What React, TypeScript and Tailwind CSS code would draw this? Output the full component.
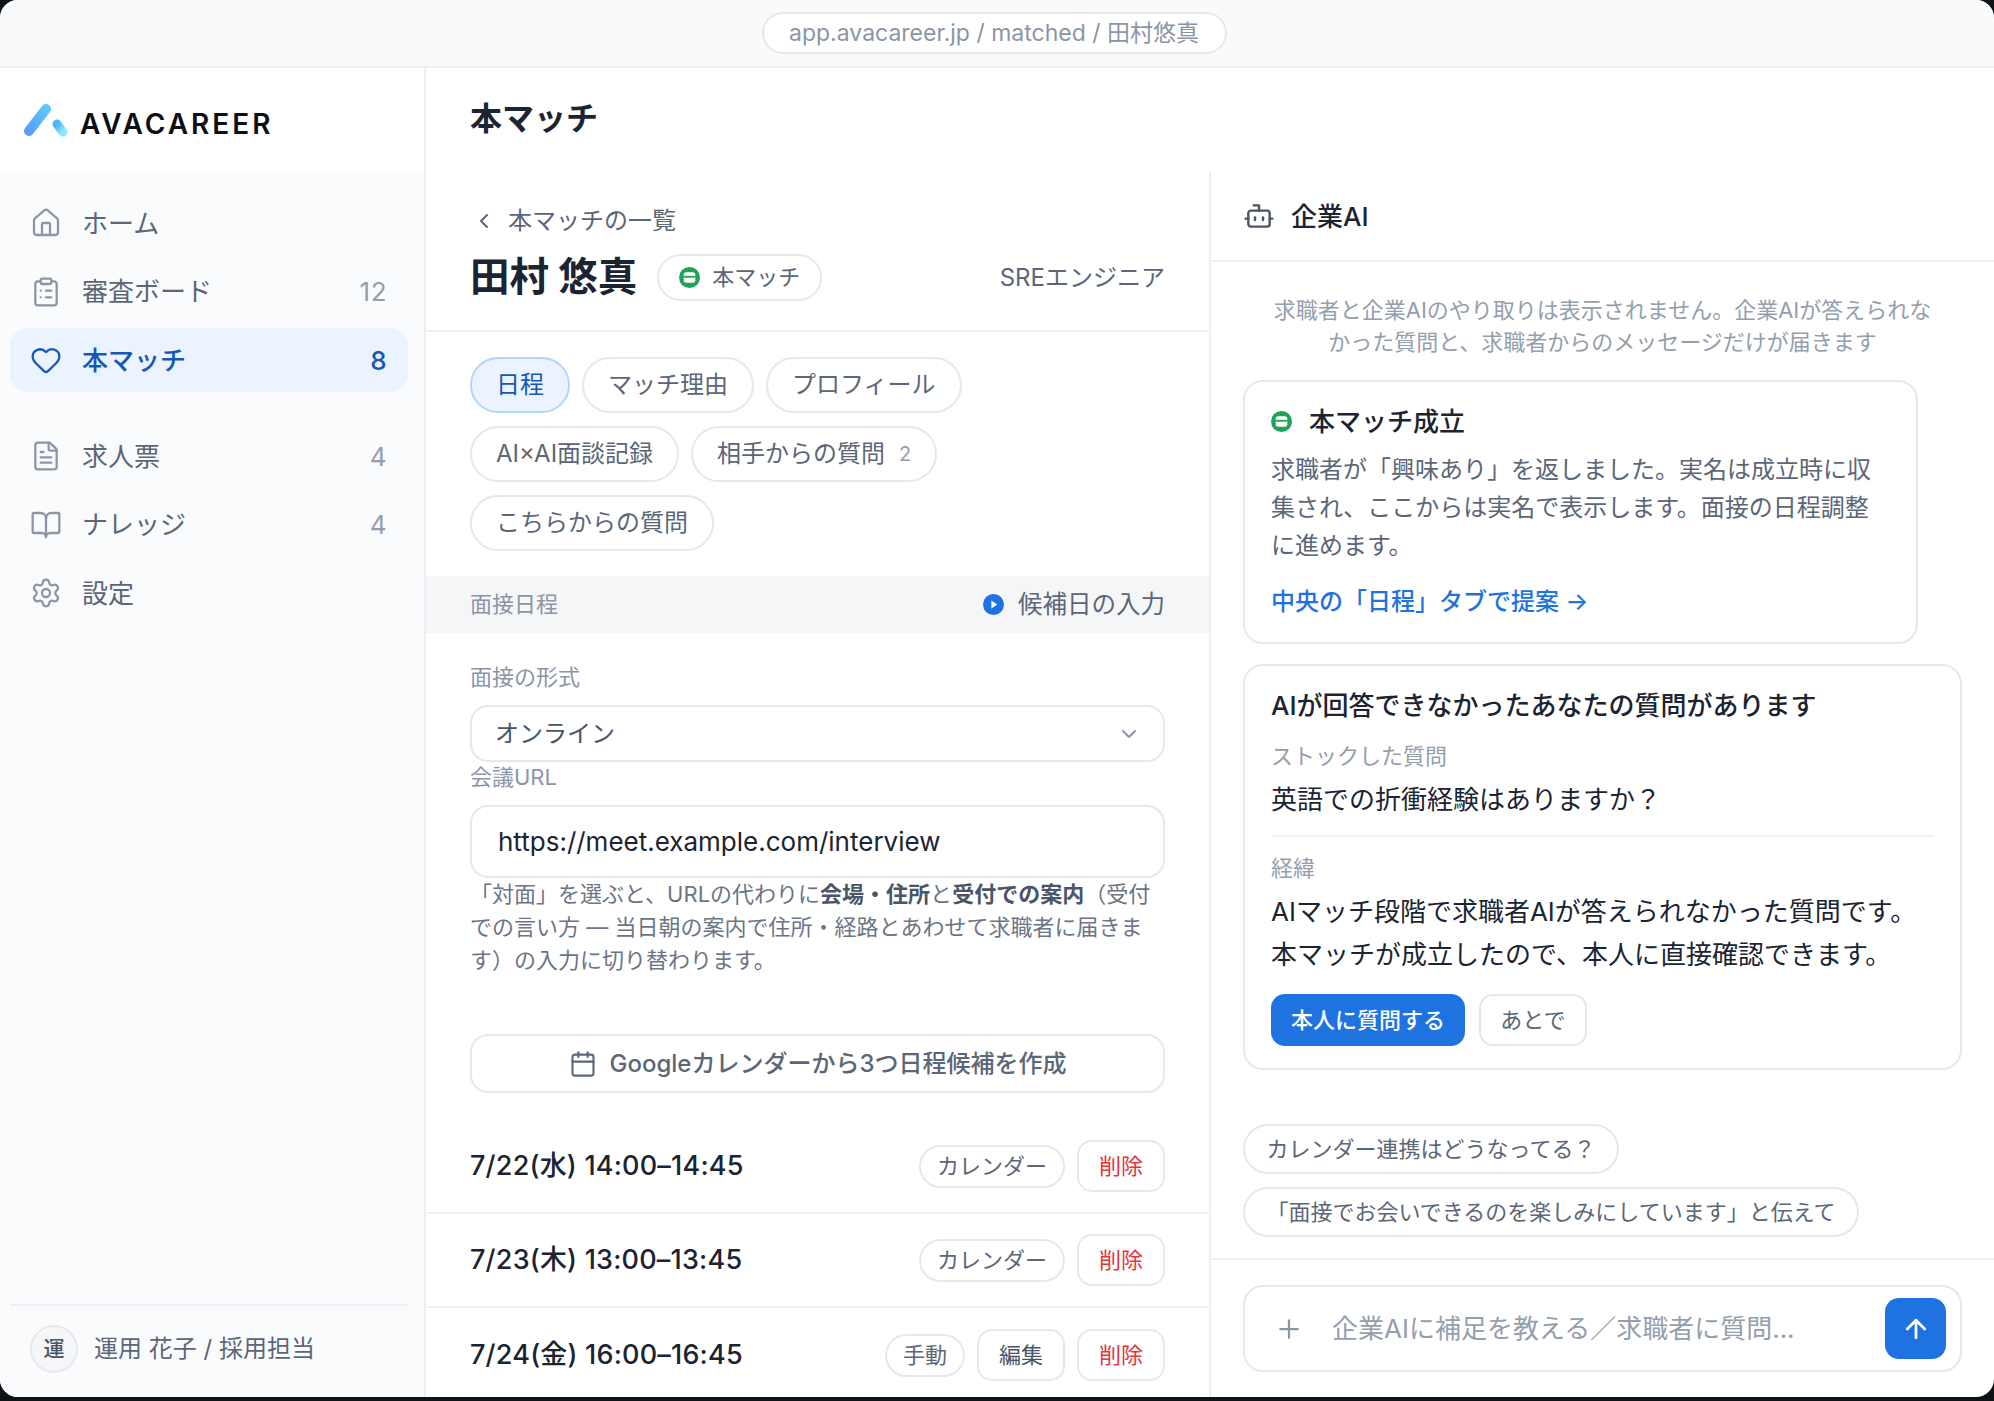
import {
  ArrowUp,
  BookOpen,
  Bot,
  Calendar,
  ChevronDown,
  ChevronLeft,
  ClipboardList,
  FileText,
  Heart,
  House,
  Plus,
  Settings,
} from "lucide-react";

function Logo() {
  return (
    <svg width="46" height="36" viewBox="0 0 46 36" className="shrink-0">
      <defs>
        <linearGradient id="logoA" x1="0" y1="1" x2="1" y2="0">
          <stop offset="0" stopColor="#5b9dfb" />
          <stop offset="1" stopColor="#5cc8fb" />
        </linearGradient>
        <linearGradient id="logoB" x1="0" y1="0" x2="1" y2="1">
          <stop offset="0" stopColor="#4fb4fb" />
          <stop offset="1" stopColor="#8ce8ff" />
        </linearGradient>
      </defs>
      <line x1="7" y1="29" x2="24" y2="7" stroke="url(#logoA)" strokeWidth="10" strokeLinecap="round" />
      <line x1="35" y1="22" x2="41" y2="30" stroke="url(#logoB)" strokeWidth="9" strokeLinecap="round" />
    </svg>
  );
}

function MatchDot({ size = 21 }: { size?: number }) {
  return (
    <svg width={size} height={size} viewBox="0 0 20 20" className="shrink-0">
      <circle cx="10" cy="10" r="10" fill="#1fa35a" />
      <rect x="4.5" y="5" width="11" height="10" rx="2.4" fill="#fff" />
      <rect x="4.5" y="8.4" width="11" height="1.8" fill="#1fa35a" />
    </svg>
  );
}

function PlayDot() {
  return (
    <svg width="21" height="21" viewBox="0 0 20 20" className="shrink-0">
      <circle cx="10" cy="10" r="10" fill="#1f73e0" />
      <path d="M8 6.2 13.5 10 8 13.8Z" fill="#fff" />
    </svg>
  );
}

function NavItem({
  icon: Icon,
  label,
  count,
  active,
}: {
  icon: typeof House;
  label: string;
  count?: number;
  active?: boolean;
}) {
  return (
    <div
      className={`h-[64px] rounded-[18px] pl-[20px] pr-[21px] flex items-center text-[26px] ${
        active ? "bg-[#ebf3fe] text-[#1558b8] font-medium" : "text-[#5b6676]"
      }`}
    >
      <Icon className={`w-[32px] h-[32px] ${active ? "text-[#1558b8]" : "text-[#8b95a5]"}`} strokeWidth={1.7} />
      <span className="ml-[20px] flex-1">{label}</span>
      {count !== undefined && (
        <span className={`tracking-[0.5px] ${active ? "text-[#1558b8]" : "text-[#949eac]"}`}>{count}</span>
      )}
    </div>
  );
}

function Tab({ label, active, count }: { label: string; active?: boolean; count?: number }) {
  return (
    <div
      className={`h-[56px] px-[24px] rounded-full border-2 flex items-center text-[24px] ${
        active ? "bg-[#ebf3fe] border-[#b4d6f9] text-[#1558b8]" : "bg-white border-[#e6e8ec] text-[#5b6676]"
      }`}
    >
      {label}
      {count !== undefined && <span className="ml-[14px] text-[20px] text-[#949eac]">{count}</span>}
    </div>
  );
}

function SlotRow({ date, source, edit }: { date: string; source: string; edit?: boolean }) {
  return (
    <div className="h-[94px] flex items-center justify-between px-[44px] border-b-2 border-[#f1f2f4] last:border-b-0">
      <span className="text-[27px] font-medium tracking-[0.2px] text-[#1b2430]">{date}</span>
      <div className="flex items-center gap-[12px]">
        <span className="h-[43px] px-[16px] rounded-full border-2 border-[#e6e8ec] flex items-center text-[22px] text-[#5b6676]">
          {source}
        </span>
        {edit && (
          <span className="h-[52px] w-[88px] rounded-[15px] border-2 border-[#e6e8ec] flex items-center justify-center text-[22px] text-[#4a5565]">
            編集
          </span>
        )}
        <span className="h-[52px] w-[88px] rounded-[15px] border-2 border-[#e6e8ec] flex items-center justify-center text-[22px] text-[#e5343a]">
          削除
        </span>
      </div>
    </div>
  );
}

export default function App() {
  return (
    <div className="h-[1401px] bg-[#0e1116] font-[Inter,'Noto_Sans_CJK_JP',sans-serif] overflow-hidden">
      <div className="h-[1397px] rounded-[18px] overflow-hidden bg-white flex flex-col">
        <div className="h-[68px] shrink-0 bg-[#f9fafc] border-b-2 border-[#eeeff2] flex items-center justify-center pr-[6px]">
          <div className="h-[42px] w-[465px] rounded-full bg-white border-2 border-[#e6e8ec] flex items-center justify-center text-[23px] text-[#8b95a5]">
            app.avacareer.jp / matched / 田村悠真
          </div>
        </div>

        <div className="flex-1 flex min-h-0">
          <aside className="w-[426px] shrink-0 border-r-2 border-[#eeeff2] flex flex-col bg-[#fafbfd]">
            <div className="h-[104px] shrink-0 bg-white flex items-center pl-[22px]">
              <Logo />
              <span className="ml-[12px] text-[28px] font-semibold tracking-[3px] text-[#0c1014] translate-y-[4px]">
                AVACAREER
              </span>
            </div>
            <nav className="pl-[10px] pr-[16px] pt-[19px] flex flex-col gap-[4.5px]">
              <NavItem icon={House} label="ホーム" />
              <NavItem icon={ClipboardList} label="審査ボード" count={12} />
              <NavItem icon={Heart} label="本マッチ" count={8} active />
              <div className="h-[23px]" />
              <NavItem icon={FileText} label="求人票" count={4} />
              <NavItem icon={BookOpen} label="ナレッジ" count={4} />
              <NavItem icon={Settings} label="設定" />
            </nav>
            <div className="mt-auto ml-[10px] mr-[16px] h-[93px] border-t-2 border-[#eeeff2] flex items-center pl-[20px] pb-[5px]">
              <div className="w-[48px] h-[48px] rounded-full bg-[#f5f6f8] border-2 border-[#e6e8ec] flex items-center justify-center text-[21px] font-medium text-[#4a5565]">
                運
              </div>
              <span className="ml-[16px] text-[24px] text-[#5b6676]">運用 花子 / 採用担当</span>
            </div>
          </aside>

          <main className="flex-1 min-w-0 flex flex-col">
            <div className="h-[104px] shrink-0 pl-[44px] pb-[2px] flex items-center text-[32px] font-bold text-[#1b2430]">
              本マッチ
            </div>
            <div className="flex-1 flex min-h-0">
              <section className="w-[785px] shrink-0 border-r-2 border-[#eeeff2] flex flex-col">
                <div className="h-[160px] shrink-0 border-b-2 border-[#eeeff2] px-[44px] pt-[31px]">
                  <div className="flex items-center text-[24px] text-[#5b6676]">
                    <ChevronLeft className="w-[24px] h-[24px] ml-[2px]" strokeWidth={2} />
                    <span className="ml-[12px]">本マッチの一覧</span>
                  </div>
                  <div className="flex items-center mt-[9px]">
                    <span className="text-[39.5px] font-bold text-[#1b2430]">田村 悠真</span>
                    <span className="ml-[20px] h-[47px] px-[20px] rounded-full border-2 border-[#e6e8ec] flex items-center gap-[12px] text-[22px] text-[#5b6676]">
                      <MatchDot />
                      本マッチ
                    </span>
                    <span className="ml-auto text-[24px] text-[#5b6676]">SREエンジニア</span>
                  </div>
                </div>
                <div className="shrink-0 pl-[44px] pr-[200px] pt-[25px] pb-[25px] flex flex-wrap gap-x-[12px] gap-y-[13px]">
                  <Tab label="日程" active />
                  <Tab label="マッチ理由" />
                  <Tab label="プロフィール" />
                  <Tab label="AI×AI面談記録" />
                  <Tab label="相手からの質問" count={2} />
                  <Tab label="こちらからの質問" />
                </div>
                <div className="h-[57px] shrink-0 bg-[#f5f6f8] px-[44px] flex items-center justify-between">
                  <span className="text-[22px] text-[#8b95a5]">面接日程</span>
                  <span className="flex items-center gap-[14px] text-[24.5px] text-[#5b6676]">
                    <PlayDot />
                    候補日の入力
                  </span>
                </div>
                <div className="px-[44px] pt-[29px] shrink-0">
                  <div className="text-[22px] leading-[30px] text-[#8b95a5]">面接の形式</div>
                  <div className="mt-[13px] h-[57px] rounded-[18px] border-2 border-[#e6e8ec] pl-[23px] pr-[22px] flex items-center justify-between text-[24px] text-[#4a5565]">
                    オンライン
                    <ChevronDown className="w-[24px] h-[24px] text-[#8b95a5]" strokeWidth={2} />
                  </div>
                  <div className="text-[22px] leading-[30px] text-[#8b95a5]">会議URL</div>
                  <div className="mt-[13px] h-[73px] rounded-[18px] border-2 border-[#e6e8ec] pl-[26px] flex items-center text-[26px] text-[#1b2430]">
                    https://meet.example.com/interview
                  </div>
                  <p className="text-[22px] leading-[33px] text-[#6b7585]">
                    「対面」を選ぶと、URLの代わりに<b className="font-bold text-[#4a5565]">会場・住所</b>と
                    <b className="font-bold text-[#4a5565]">受付での案内</b>（受付での言い方 — 当日朝の案内で住所・経路とあわせて求職者に届きます）の入力に切り替わります。
                  </p>
                  <div className="mt-[57px] h-[59px] rounded-[18px] border-2 border-[#e6e8ec] flex items-center justify-center gap-[13px] text-[24px] font-medium text-[#5b6676]">
                    <Calendar className="w-[28px] h-[28px]" strokeWidth={1.8} />
                    Googleカレンダーから3つ日程候補を作成
                  </div>
                </div>
                <div className="mt-[27px]">
                  <SlotRow date="7/22(水) 14:00–14:45" source="カレンダー" />
                  <SlotRow date="7/23(木) 13:00–13:45" source="カレンダー" />
                  <SlotRow date="7/24(金) 16:00–16:45" source="手動" edit />
                </div>
              </section>

              <section className="flex-1 min-w-0 flex flex-col">
                <div className="h-[90px] shrink-0 border-b-2 border-[#eeeff2] pl-[32px] flex items-center gap-[16px] text-[26px] font-medium text-[#1b2430]">
                  <Bot className="w-[32px] h-[32px] text-[#4a5565]" strokeWidth={1.8} />
                  企業AI
                </div>
                <div className="flex-1 px-[32px] pt-[32px]">
                  <p className="px-[26px] text-center text-[22px] leading-[32px] text-[#949eac]">
                    求職者と企業AIのやり取りは表示されません。企業AIが答えられなかった質問と、求職者からのメッセージだけが届きます
                  </p>
                  <div className="mt-[22px] w-[675px] h-[264px] rounded-[20px] border-2 border-[#e6e8ec] pl-[26px] pr-[40px] pt-[20px]">
                    <div className="flex items-center gap-[17px] text-[26px] font-medium text-[#1b2430]">
                      <MatchDot />
                      本マッチ成立
                    </div>
                    <p className="mt-[10px] text-[24px] leading-[38px] text-[#5b6676]">
                      求職者が「興味あり」を返しました。実名は成立時に収集され、ここからは実名で表示します。面接の日程調整に進めます。
                    </p>
                    <div className="mt-[19px] text-[24px] font-medium text-[#1f73e0]">中央の「日程」タブで提案 →</div>
                  </div>
                  <div className="mt-[20px] h-[406px] rounded-[20px] border-2 border-[#e6e8ec] px-[26px] pt-[20px]">
                    <div className="text-[26px] font-medium text-[#1b2430]">AIが回答できなかったあなたの質問があります</div>
                    <div className="mt-[15px] text-[22px] text-[#949eac]">ストックした質問</div>
                    <div className="mt-[7px] text-[26px] text-[#1b2430]">英語での折衝経験はありますか？</div>
                    <div className="mt-[16px] border-t-2 border-[#f1f2f4]" />
                    <div className="mt-[15px] text-[22px] text-[#949eac]">経緯</div>
                    <p className="mt-[6px] text-[26px] leading-[42.5px] text-[#1b2430]">
                      AIマッチ段階で求職者AIが答えられなかった質問です。本マッチが成立したので、本人に直接確認できます。
                    </p>
                    <div className="mt-[18px] flex gap-[14px]">
                      <span className="h-[52px] w-[194px] rounded-[14px] bg-[#1f73e0] flex items-center justify-center text-[22px] font-medium text-white">
                        本人に質問する
                      </span>
                      <span className="h-[52px] w-[108px] rounded-[14px] border-2 border-[#e6e8ec] flex items-center justify-center text-[22px] text-[#5b6676]">
                        あとで
                      </span>
                    </div>
                  </div>
                  <div className="mt-[54px] flex flex-col items-start gap-[13px]">
                    <span className="h-[50px] w-[376px] rounded-full border-2 border-[#e6e8ec] flex items-center justify-center text-[22px] text-[#5b6676]">
                      カレンダー連携はどうなってる？
                    </span>
                    <span className="h-[50px] w-[616px] rounded-full border-2 border-[#e6e8ec] flex items-center justify-center text-[22px] text-[#5b6676]">
                      「面接でお会いできるのを楽しみにしています」と伝えて
                    </span>
                  </div>
                </div>
                <div className="h-[139px] shrink-0 border-t-2 border-[#eeeff2] px-[32px] pt-[25px]">
                  <div className="h-[87px] rounded-[20px] border-2 border-[#e6e8ec] pl-[29px] pr-[14px] flex items-center">
                    <Plus className="w-[30px] h-[30px] text-[#8b95a5]" strokeWidth={1.8} />
                    <span className="ml-[28px] flex-1 text-[26px] text-[#949eac]">企業AIに補足を教える／求職者に質問...</span>
                    <div className="w-[61px] h-[61px] rounded-[14px] bg-[#1f73e0] flex items-center justify-center">
                      <ArrowUp className="w-[30px] h-[30px] text-white" strokeWidth={2.2} />
                    </div>
                  </div>
                </div>
              </section>
            </div>
          </main>
        </div>
      </div>
    </div>
  );
}
